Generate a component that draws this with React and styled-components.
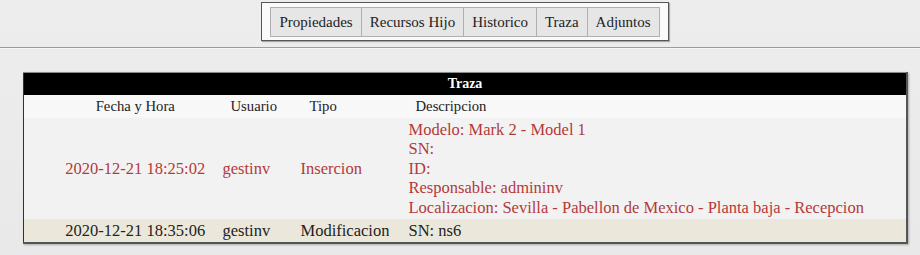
import React from "react"
import styled, { createGlobalStyle } from "styled-components"

const GlobalStyle = createGlobalStyle`
	html, body {
		margin: 0;
		padding: 0;
		background: linear-gradient(180deg, #ededed 0%, #e9e9e9 100%);
		font-family: "Liberation Serif", "Times New Roman", serif;
		color: #222;
	}
	#root {
		min-height: 255px;
	}
`

const TopBar = styled.div`
	display: flex;
	justify-content: center;
	padding: 2px 0 0 10px;
	height: 48px;
	box-sizing: border-box;
	border-bottom: 1px solid #9c9c9c;
	box-shadow: 0 1px 0 #f6f6f6;
`

const TabBox = styled.nav`
	display: flex;
	align-self: flex-start;
	padding: 4px 8px 3px 8px;
	background: #fafafa;
	border: 1px solid #555;
	box-shadow: 1px 1px 1px #aaa;
`

const Tab = styled.a`
	display: flex;
	align-items: center;
	height: 28px;
	padding: 0 ${(p) => p.$pad}px;
	background: #e6e6e6;
	border: 1px solid #b0b0b0;
	margin-left: -1px;
	font-size: 15px;
	color: #222;
	text-decoration: none;
	&:first-child {
		margin-left: 0;
	}
`

const Content = styled.div`
	padding: 24px 12px 0 23px;
`

const Table = styled.table`
	width: 100%;
	table-layout: fixed;
	border-collapse: collapse;
	border-top: 1px solid #8a8a8a;
	border-left: 1px solid #333;
	border-right: 2px solid #555;
	border-bottom: 2px solid #555;
	box-shadow: 1px 1px 2px #aaa;
`

const Col = styled.col`
	width: ${(p) => (p.$w ? `${p.$w}px` : "auto")};
`

const Title = styled.th`
	background: #000;
	color: #fff;
	font-size: 14px;
	font-weight: bold;
	height: 22px;
	padding: 0;
	text-align: center;
`

const HeadRow = styled.tr`
	background: #f8f8f8;
`

const HeadCell = styled.th`
	font-weight: normal;
	font-size: 14.7px;
	height: 23px;
	padding: 0 0 0 ${(p) => p.$pad || 0}px;
	text-align: ${(p) => p.$align || "left"};
	vertical-align: middle;
`

const Row = styled.tr`
	background: ${(p) => p.$bg};
	color: ${(p) => p.$color};
`

const Cell = styled.td`
	font-size: 16.5px;
	line-height: 19.4px;
	padding: 2px 0 2px ${(p) => p.$pad || 0}px;
	text-align: ${(p) => p.$align || "left"};
	white-space: nowrap;
	vertical-align: middle;
`

const Line = styled.div`
	line-height: 19.4px;
`

const tabs = [
	{ label: "Propiedades", pad: 8 },
	{ label: "Recursos Hijo", pad: 8 },
	{ label: "Historico", pad: 8 },
	{ label: "Traza", pad: 8 },
	{ label: "Adjuntos", pad: 8 }
]

const rows = [
	{
		fecha: "2020-12-21 18:25:02",
		usuario: "gestinv",
		tipo: "Insercion",
		desc: [
			"Modelo: Mark 2 - Model 1",
			"SN:",
			"ID:",
			"Responsable: admininv",
			"Localizacion: Sevilla - Pabellon de Mexico - Planta baja - Recepcion"
		],
		bg: "#f2f2f2",
		color: "#b23a3a"
	},
	{
		fecha: "2020-12-21 18:35:06",
		usuario: "gestinv",
		tipo: "Modificacion",
		desc: ["SN: ns6"],
		bg: "#ebe8db",
		color: "#222"
	}
]

const App = () => {
	return (
		<>
			<GlobalStyle />
			<TopBar>
				<TabBox>
					{tabs.map((t) => (
						<Tab key={t.label} href="#" $pad={t.pad}>
							{t.label}
						</Tab>
					))}
				</TabBox>
			</TopBar>
			<Content>
				<Table>
					<colgroup>
						<Col $w={191} />
						<Col $w={79} />
						<Col $w={107} />
						<Col />
					</colgroup>
					<thead>
						<tr>
							<Title colSpan={4}>Traza</Title>
						</tr>
						<HeadRow>
							<HeadCell $pad={32} $align="center">Fecha y Hora</HeadCell>
							<HeadCell $pad={16}>Usuario</HeadCell>
							<HeadCell $pad={16}>Tipo</HeadCell>
							<HeadCell $pad={15}>Descripcion</HeadCell>
						</HeadRow>
					</thead>
					<tbody>
						{rows.map((r) => (
							<Row key={r.fecha} $bg={r.bg} $color={r.color}>
								<Cell $pad={32} $align="center">{r.fecha}</Cell>
								<Cell $pad={8}>{r.usuario}</Cell>
								<Cell $pad={7}>{r.tipo}</Cell>
								<Cell $pad={8}>
									{r.desc.map((d) => (
										<Line key={d}>{d}</Line>
									))}
								</Cell>
							</Row>
						))}
					</tbody>
				</Table>
			</Content>
		</>
	)
}

export default App
